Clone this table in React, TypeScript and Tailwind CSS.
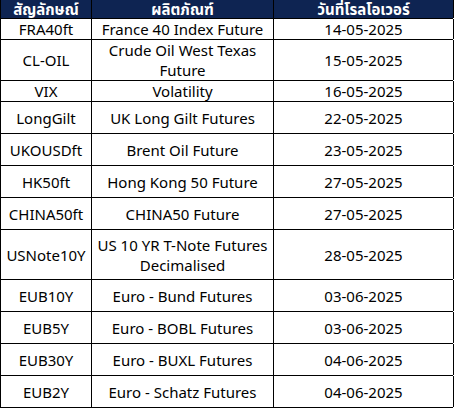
const rows = [
  { symbol: "FRA40ft", product: "France 40 Index Future", date: "14-05-2025", h: "h-[21px]" },
  { symbol: "CL-OIL", product: "Crude Oil West Texas Future", date: "15-05-2025", h: "h-[41px]" },
  { symbol: "VIX", product: "Volatility", date: "16-05-2025", h: "h-[21px]" },
  { symbol: "LongGilt", product: "UK Long Gilt Futures", date: "22-05-2025", h: "h-[32px]" },
  { symbol: "UKOUSDft", product: "Brent Oil Future", date: "23-05-2025", h: "h-[32px]" },
  { symbol: "HK50ft", product: "Hong Kong 50 Future", date: "27-05-2025", h: "h-[32px]" },
  { symbol: "CHINA50ft", product: "CHINA50 Future", date: "27-05-2025", h: "h-[32px]" },
  { symbol: "USNote10Y", product: "US 10 YR T-Note Futures Decimalised", date: "28-05-2025", h: "h-[50px]" },
  { symbol: "EUB10Y", product: "Euro - Bund Futures", date: "03-06-2025", h: "h-[32px]" },
  { symbol: "EUB5Y", product: "Euro - BOBL Futures", date: "03-06-2025", h: "h-[32px]" },
  { symbol: "EUB30Y", product: "Euro - BUXL Futures", date: "04-06-2025", h: "h-[32px]" },
  { symbol: "EUB2Y", product: "Euro - Schatz Futures", date: "04-06-2025", h: "h-[32px]" },
];

export default function App() {
  return (
    <div
      className="w-[456px] h-[408px] bg-white text-black"
      style={{ fontFamily: '"Noto Sans", "Noto Sans Thai", sans-serif' }}
    >
      <div className="w-[453px] border-l border-black">
        {/* Header */}
        <div className="grid grid-cols-[91px_182px_180px] h-[19px] bg-[#0e2452] border-b border-black text-white font-bold text-[15px] leading-[18px]">
          <div className="border-r border-black text-center">สัญลักษณ์</div>
          <div className="border-r border-black text-center">ผลิตภัณฑ์</div>
          <div className="border-r border-black text-center">วันที่โรลโอเวอร์</div>
        </div>

        {rows.map((r) => (
          <div
            key={r.symbol}
            className={`grid grid-cols-[91px_182px_180px] ${r.h} border-b border-black text-[15px] leading-[20px]`}
          >
            <div className="border-r border-black flex items-center justify-center text-center">
              {r.symbol}
            </div>
            <div className="border-r border-black flex items-center justify-center text-center px-1">
              {r.product}
            </div>
            <div className="border-r border-black flex items-center justify-center text-center">
              {r.date}
            </div>
          </div>
        ))}
      </div>
    </div>
  );
}
